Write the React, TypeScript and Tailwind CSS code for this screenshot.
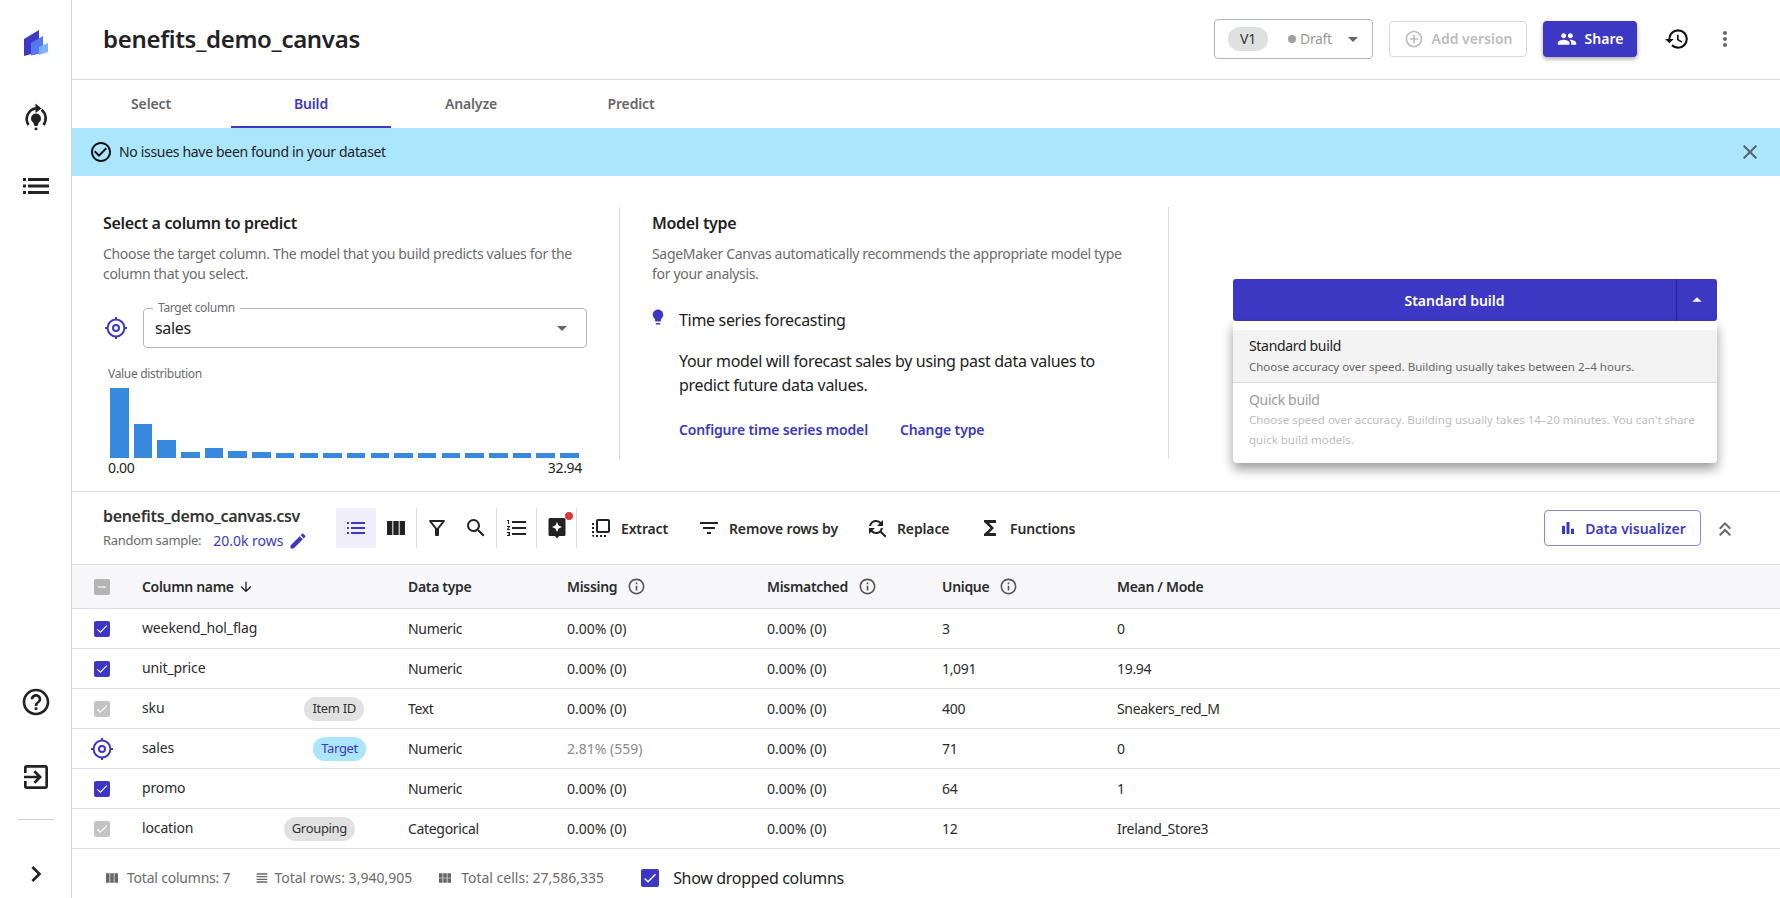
import React from 'react';
import {
  MdAddCircleOutline,
  MdArrowDownward,
  MdArrowDropDown,
  MdArrowDropUp,
  MdBarChart,
  MdCheck,
  MdCheckCircleOutline,
  MdChevronRight,
  MdClose,
  MdEdit,
  MdExitToApp,
  MdFilterList,
  MdFindReplace,
  MdFlipToFront,
  MdFormatListNumbered,
  MdFunctions,
  MdHelpOutline,
  MdHistory,
  MdInfoOutline,
  MdKeyboardDoubleArrowUp,
  MdLightbulb,
  MdMoreVert,
  MdOutlineFilterAlt,
  MdPeople,
  MdRemove,
  MdSearch,
  MdViewColumn,
  MdViewHeadline,
  MdViewModule,
} from 'react-icons/md';

const bars = [70, 34, 18, 6.5, 10, 7.5, 6, 5, 5, 5, 5, 5, 5, 5, 5, 5, 5, 5, 5, 5];

type Row = {
  name: string;
  type: string;
  missing: string;
  unique: string;
  mean: string;
  state: 'on' | 'off' | 'target';
  badge?: string;
};

const rows: Row[] = [
  { name: 'weekend_hol_flag', type: 'Numeric', missing: '0.00% (0)', unique: '3', mean: '0', state: 'on' },
  { name: 'unit_price', type: 'Numeric', missing: '0.00% (0)', unique: '1,091', mean: '19.94', state: 'on' },
  { name: 'sku', type: 'Text', missing: '0.00% (0)', unique: '400', mean: 'Sneakers_red_M', state: 'off', badge: 'Item ID' },
  { name: 'sales', type: 'Numeric', missing: '2.81% (559)', unique: '71', mean: '0', state: 'target', badge: 'Target' },
  { name: 'promo', type: 'Numeric', missing: '0.00% (0)', unique: '64', mean: '1', state: 'on' },
  { name: 'location', type: 'Categorical', missing: '0.00% (0)', unique: '12', mean: 'Ireland_Store3', state: 'off', badge: 'Grouping' },
];

function Logo() {
  return (
    <svg width="24" height="26" viewBox="0 0 24 26">
      <path d="M0 9 L15 0 V22 L0 26 Z" fill="#3F38C5" />
      <path d="M7 13 L19 6 V23 L7 25.5 Z" fill="#5277EE" />
      <path d="M15 20 V17 L24 13 V22 L15 25 Z" fill="#7DB2F8" />
    </svg>
  );
}

function BulbCycle() {
  return (
    <svg width="26" height="28" viewBox="0 0 26 28" fill="none">
      <path d="M5.5 22 A11 11 0 0 1 13 5.2" stroke="#222" strokeWidth="2.6" />
      <path d="M20.5 22 A11 11 0 0 0 18.5 6.8" stroke="#222" strokeWidth="2.6" />
      <path d="M12.5 0.5 L18.5 5.5 L12.5 10 Z" fill="#222" />
      <circle cx="13" cy="15.5" r="5" fill="#222" />
      <path d="M10 18.5 H16 L14.5 23 H11.5 Z" fill="#222" />
      <rect x="11.6" y="24.6" width="2.8" height="2.6" rx="1" fill="#222" />
    </svg>
  );
}

function Target({ size = 24 }: { size?: number }) {
  return (
    <svg width={size} height={size} viewBox="0 0 24 24" fill="none" stroke="#3D38C4">
      <circle cx="12" cy="12" r="8.4" strokeWidth="2" />
      <circle cx="12" cy="12" r="3" strokeWidth="2" />
      <path d="M12 1 V4 M12 20 V23 M1 12 H4 M20 12 H23" strokeWidth="2" />
    </svg>
  );
}

function Sparkle() {
  return (
    <svg width="18" height="22" viewBox="0 0 18 22">
      <path d="M2 1 H16 A1.5 1.5 0 0 1 17.5 2.5 V17.5 A1.5 1.5 0 0 1 16 19 H11 L9 21.5 L7 19 H2 A1.5 1.5 0 0 1 0.5 17.5 V2.5 A1.5 1.5 0 0 1 2 1 Z" fill="#222" />
      <path d="M9 5 L10.6 8.4 L14 10 L10.6 11.6 L9 15 L7.4 11.6 L4 10 L7.4 8.4 Z" fill="#fff" />
    </svg>
  );
}

function Check({ muted }: { muted?: boolean }) {
  return (
    <span className={`flex h-[16px] w-[16px] items-center justify-center rounded-[2px] ${muted ? 'bg-[#c4c4c4]' : 'bg-[#3d38c4]'}`}>
      <MdCheck className="text-white" size={14} />
    </span>
  );
}

function ToolDivider() {
  return <span className="h-[40px] w-px bg-[#dcdcdc]" />;
}

function ToolAction({ icon, label, width }: { icon: React.ReactNode; label: string; width: string }) {
  return (
    <div className={`flex items-center ${width}`}>
      <span className="flex w-[24px] justify-center text-[#222]">{icon}</span>
      <span className="ml-[8px] text-[14px] font-semibold tracking-[-0.01em] text-[#2b2b2b]">{label}</span>
    </div>
  );
}

function HeaderLabel({ text, info, width }: { text: string; info?: boolean; width: string }) {
  return (
    <div className={`flex items-center ${width}`}>
      <span className="text-[14px] font-semibold text-[#2b2b2b]">{text}</span>
      {info && <MdInfoOutline className="ml-[10px] text-[#555]" size={19} />}
    </div>
  );
}

function TableRow({ row }: { row: Row }) {
  const badgeClass =
    row.badge === 'Target'
      ? 'mr-[42px] bg-[#abe6fd] text-[#3d38c4]'
      : row.badge === 'Grouping'
        ? 'mr-[53px] bg-[#e1e1e1] text-[#333]'
        : 'mr-[44px] bg-[#e1e1e1] text-[#333]';
  return (
    <div className="flex h-[40px] items-center border-b border-[#dedede] text-[14px] text-[#2b2b2b] last:h-[37px]">
      <div className="flex w-[70px] shrink-0 justify-start pl-[22px]">
        {row.state === 'target' ? (
          <span className="-ml-[4px]">
            <Target />
          </span>
        ) : (
          <Check muted={row.state === 'off'} />
        )}
      </div>
      <div className="flex w-[266px] shrink-0 items-center justify-between">
        <span className="-mt-[2px] tracking-[-0.01em]">{row.name}</span>
        {row.badge && (
          <span className={`flex h-[24px] items-center rounded-full px-[8px] text-[13px] ${badgeClass}`}>{row.badge}</span>
        )}
      </div>
      <div className="w-[159px] shrink-0">{row.type}</div>
      <div className={`w-[200px] shrink-0 tracking-normal ${row.state === 'target' ? 'text-[#8a8a8a]' : ''}`}>{row.missing}</div>
      <div className="w-[175px] shrink-0 tracking-normal">0.00% (0)</div>
      <div className="w-[175px] shrink-0">{row.unique}</div>
      <div>{row.mean}</div>
    </div>
  );
}

export default function App() {
  return (
    <div className="flex h-[898px] w-[1780px] overflow-hidden bg-white font-['Noto_Sans',sans-serif] tracking-[-0.02em]">
      <aside className="flex w-[72px] shrink-0 flex-col items-center border-r border-[#d5d5d5] text-[#222]">
        <div className="mt-[30px]">
          <Logo />
        </div>
        <div className="mt-[47px]">
          <BulbCycle />
        </div>
        <svg className="mt-[46px]" width="26" height="18" viewBox="0 0 26 18" fill="#222">
          <rect x="0" y="1" width="3" height="3" />
          <rect x="5" y="1" width="21" height="3" />
          <rect x="0" y="7.5" width="3" height="3" />
          <rect x="5" y="7.5" width="21" height="3" />
          <rect x="0" y="14" width="3" height="3" />
          <rect x="5" y="14" width="21" height="3" />
        </svg>
        <div className="flex-1" />
        <MdHelpOutline size={32} />
        <MdExitToApp className="mt-[43px]" size={32} />
        <div className="mt-[26px] h-px w-[36px] bg-[#d5d5d5]" />
        <MdChevronRight className="mt-[38px] mb-[8px]" size={32} />
      </aside>

      <main className="flex min-w-0 flex-1 flex-col">
        <header className="flex h-[80px] shrink-0 items-center border-b border-[#d9d9d9] pl-[31px] pr-[43px]">
          <h1 className="-mt-[2px] text-[24px] font-semibold text-[#222]">benefits_demo_canvas</h1>
          <div className="ml-auto -mt-[2px] flex items-center">
            <div className="flex h-[40px] w-[159px] items-center rounded-[4px] border border-[#b5b5b5] pl-[13px]">
              <span className="flex h-[24px] w-[40px] items-center justify-center rounded-full bg-[#dfe0e0] text-[14px] text-[#333]">V1</span>
              <span className="ml-[20px] h-[8px] w-[8px] rounded-full bg-[#a0a0a0]" />
              <span className="ml-[4px] text-[14px] text-[#9a9a9a]">Draft</span>
              <MdArrowDropDown className="ml-[9px] text-[#666]" size={24} />
            </div>
            <div className="ml-[16px] flex h-[36px] w-[138px] items-center justify-center gap-[8px] rounded-[4px] border border-[#d9d9d9] text-[14px] font-semibold tracking-normal text-[#bcbcbc]">
              <MdAddCircleOutline size={20} />
              Add version
            </div>
            <div className="ml-[16px] flex h-[36px] w-[94px] items-center justify-center gap-[8px] rounded-[4px] bg-[#3d38c4] text-[14px] font-semibold tracking-normal text-white shadow-[0_2px_4px_rgba(0,0,0,0.35)]">
              <MdPeople size={20} />
              Share
            </div>
            <MdHistory className="ml-[27px] text-[#111]" size={26} />
            <MdMoreVert className="ml-[23px] text-[#666]" size={24} />
          </div>
        </header>

        <nav className="-ml-[1px] flex h-[48px] shrink-0 text-[14px] font-semibold tracking-[-0.01em] text-[#666]">
          {['Select', 'Build', 'Analyze', 'Predict'].map((t) => (
            <div
              key={t}
              className={`flex w-[160px] items-center justify-center ${
                t === 'Build' ? 'border-b-2 border-[#3d38c4] text-[#3d38c4]' : 'pb-[2px]'
              }`}
            >
              {t}
            </div>
          ))}
        </nav>

        <div className="flex h-[48px] shrink-0 items-center bg-[#abe6fd] pl-[17px] pr-[18px] text-[14px] text-[#222]">
          <MdCheckCircleOutline size={24} className="text-[#111]" />
          <span className="ml-[6px] -mt-[1px]">No issues have been found in your dataset</span>
          <MdClose className="ml-auto text-[#4f6671]" size={24} />
        </div>

        <section className="flex h-[316px] shrink-0 border-b border-[#d9d9d9] pt-[31px] pb-[32px]">
          <div className="w-[548px] shrink-0 border-r border-[#dcdcdc] pl-[31px] pr-[32px]">
            <h2 className="mt-[5px] text-[16px] leading-[22px] font-semibold text-[#222]">Select a column to predict</h2>
            <p className="mt-[10px] text-[14px] leading-[20px] text-[#6b6b6b]">
              Choose the target column. The model that you build predicts values for the column that you select.
            </p>
            <div className="mt-[24px] flex items-center">
              <span className="ml-[1px]">
                <Target />
              </span>
              <div className="relative ml-[15px] flex h-[40px] flex-1 items-center rounded-[4px] border border-[#b5b5b5] pl-[11px] pr-[12px] text-[16px] text-[#222]">
                <span className="absolute -top-[9px] left-[9px] bg-white px-[5px] text-[12px] leading-[16px] text-[#6b6b6b]">Target column</span>
                sales
                <MdArrowDropDown className="ml-auto text-[#666]" size={24} />
              </div>
            </div>
            <div className="mt-[18px] ml-[5px] text-[12px] leading-[16px] text-[#6b6b6b]">Value distribution</div>
            <div className="mt-[6px] ml-[7px] flex h-[70px] items-end gap-[5.2px]">
              {bars.map((h, i) => (
                <span key={i} className="w-[18.5px] bg-[#3689dd]" style={{ height: h }} />
              ))}
            </div>
            <div className="mt-[1px] ml-[5px] mr-[5px] flex justify-between text-[14px] leading-[18px] text-[#222]">
              <span>0.00</span>
              <span>32.94</span>
            </div>
          </div>

          <div className="w-[549px] shrink-0 border-r border-[#dcdcdc] pl-[32px] pr-[32px]">
            <h2 className="mt-[5px] text-[16px] leading-[22px] font-semibold text-[#222]">Model type</h2>
            <p className="mt-[10px] text-[14px] leading-[20px] text-[#6b6b6b]">
              SageMaker Canvas automatically recommends the appropriate model type for your analysis.
            </p>
            <div className="mt-[24px] flex items-start">
              <MdLightbulb className="-ml-[3px] text-[#3d38c4]" size={18} />
              <span className="ml-[12px] text-[16px] leading-[24px] text-[#222]">Time series forecasting</span>
            </div>
            <p className="mt-[17px] ml-[27px] text-[16px] leading-[24px] text-[#222]">
              Your model will forecast sales by using past data values to predict future data values.
            </p>
            <div className="mt-[22px] ml-[27px] flex gap-[32px] text-[14px] font-semibold tracking-[-0.01em] text-[#3d38c4]">
              <span>Configure time series model</span>
              <span>Change type</span>
            </div>
          </div>

          <div className="flex-1 pl-[64px] pr-[63px] pt-[72px]">
            <div className="relative">
              <div className="flex h-[42px] rounded-[3px] bg-[#3d38c4] text-[14px] font-semibold tracking-normal text-white">
                <div className="flex flex-1 items-center justify-center border-r border-[#2a2690]">Standard build</div>
                <div className="flex w-[40px] items-center justify-center">
                  <MdArrowDropUp size={22} />
                </div>
              </div>
              <div className="absolute left-0 right-0 top-[42px] z-10 h-[142px] rounded-b-[4px] bg-white pt-[9px] shadow-[0_6px_12px_rgba(0,0,0,0.4)]">
                <div className="h-[53px] border-b border-[#dcdcdc] bg-[#f3f3f3] px-[16px] pt-[6px]">
                  <div className="text-[14px] leading-[20px] text-[#222]">Standard build</div>
                  <div className="mt-[3px] text-[11.5px] leading-[16px] tracking-normal text-[#666]">
                    Choose accuracy over speed. Building usually takes between 2–4 hours.
                  </div>
                </div>
                <div className="px-[16px] pt-[7px]">
                  <div className="text-[14px] leading-[20px] text-[#9b9b9b]">Quick build</div>
                  <div className="text-[11.5px] leading-[20px] tracking-normal text-[#bdbdbd]">
                    Choose speed over accuracy. Building usually takes 14–20 minutes. You can't share quick build models.
                  </div>
                </div>
              </div>
            </div>
          </div>
        </section>

        <div className="flex h-[73px] shrink-0 items-center border-b border-[#dcdcdc] pl-[31px]">
          <div className="w-[233px] shrink-0">
            <div className="text-[16px] leading-[22px] font-semibold text-[#333]">benefits_demo_canvas.csv</div>
            <div className="mt-[3px] flex items-center text-[13px] text-[#6b6b6b]">
              Random sample:
              <span className="ml-[12px] text-[14px] tracking-normal text-[#3d38c4]">20.0k rows</span>
              <MdEdit className="ml-[5px] text-[#3d38c4]" size={20} />
            </div>
          </div>
          <div className="flex h-[40px] w-[40px] items-center justify-center bg-[#efeefa]">
            <svg width="18" height="12" viewBox="0 0 18 12" fill="#3d38c4">
              <rect x="0" y="0" width="2" height="2" />
              <rect x="4" y="0" width="14" height="2" />
              <rect x="0" y="5" width="2" height="2" />
              <rect x="4" y="5" width="14" height="2" />
              <rect x="0" y="10" width="2" height="2" />
              <rect x="4" y="10" width="14" height="2" />
            </svg>
          </div>
          <div className="flex w-[40px] justify-center text-[#222]">
            <MdViewColumn size={24} />
          </div>
          <ToolDivider />
          <div className="flex w-[39px] justify-center text-[#222]">
            <MdOutlineFilterAlt size={24} />
          </div>
          <div className="flex w-[40px] justify-center text-[#222]">
            <MdSearch size={24} />
          </div>
          <ToolDivider />
          <div className="flex w-[39px] justify-center text-[#222]">
            <MdFormatListNumbered size={24} />
          </div>
          <ToolDivider />
          <div className="flex w-[39px] justify-center">
            <span className="relative flex">
              <Sparkle />
              <span className="absolute -right-[7px] -top-[5px] h-[8px] w-[8px] rounded-full bg-[#d9363e]" />
            </span>
          </div>
          <ToolDivider />
          <div className="ml-[12px] flex items-center">
            <ToolAction icon={<MdFlipToFront size={24} />} label="Extract" width="w-[108px]" />
            <ToolAction icon={<MdFilterList size={24} />} label="Remove rows by" width="w-[168px]" />
            <ToolAction icon={<MdFindReplace size={24} />} label="Replace" width="w-[113px]" />
            <ToolAction icon={<MdFunctions size={26} />} label="Functions" width="w-[100px]" />
          </div>
          <div className="ml-auto mr-[79px] flex h-[36px] w-[157px] items-center justify-center gap-[8px] rounded-[4px] border border-[#8b87e0] text-[14px] font-semibold tracking-normal text-[#3d38c4]">
            <MdBarChart size={18} />
            Data visualizer
          </div>
        </div>

        <div className="relative">
          <MdKeyboardDoubleArrowUp className="absolute -top-[48px] right-[43px] text-[#666]" size={24} />
        </div>

        <div className="flex h-[44px] shrink-0 items-center border-b border-[#dcdcdc] bg-[#f7f7f9]">
          <div className="w-[70px] shrink-0 pl-[22px]">
            <span className="flex h-[16px] w-[16px] items-center justify-center rounded-[2px] bg-[#b4b4b4]">
              <MdRemove className="text-white" size={14} />
            </span>
          </div>
          <div className="flex w-[266px] shrink-0 items-center">
            <span className="text-[14px] font-semibold text-[#2b2b2b]">Column name</span>
            <MdArrowDownward className="ml-[4px] text-[#222]" size={16} />
          </div>
          <HeaderLabel text="Data type" width="w-[159px]" />
          <HeaderLabel text="Missing" info width="w-[200px]" />
          <HeaderLabel text="Mismatched" info width="w-[175px]" />
          <HeaderLabel text="Unique" info width="w-[175px]" />
          <HeaderLabel text="Mean / Mode" width="w-[200px]" />
        </div>

        {rows.map((r) => (
          <TableRow key={r.name} row={r} />
        ))}

        <footer className="flex flex-1 items-center pl-[32px] pt-[8px] text-[14px] tracking-normal text-[#6b6b6b]">
          <MdViewColumn className="text-[#666]" size={16} />
          <span className="ml-[7px] tracking-[-0.015em]">Total columns: 7</span>
          <MdViewHeadline className="ml-[24px] text-[#666]" size={16} />
          <span className="ml-[4px]">Total rows: 3,940,905</span>
          <MdViewModule className="ml-[25px] text-[#666]" size={16} />
          <span className="ml-[8px]">Total cells: 27,586,335</span>
          <span className="ml-[37px] flex h-[18px] w-[18px] items-center justify-center rounded-[2px] bg-[#3d38c4]">
            <MdCheck className="text-white" size={16} />
          </span>
          <span className="ml-[14px] text-[16px] tracking-[-0.02em] text-[#222]">Show dropped columns</span>
        </footer>
      </main>
    </div>
  );
}
